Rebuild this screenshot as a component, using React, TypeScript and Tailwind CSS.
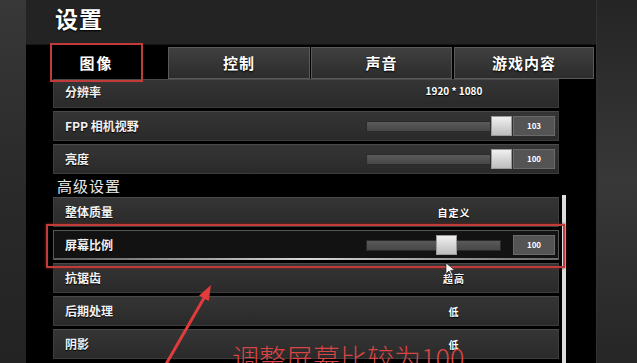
import React from 'react';

type SliderProps = { track: number; thumb: number; value: string };

const Slider: React.FC<SliderProps> = ({ track, thumb, value }) => (
  <div className="flex items-center pl-[14px]">
    <div className="relative w-[146px] h-[20px] flex items-center">
      <div
        className="h-[11px] bg-linear-to-b from-[#5a5a5a] to-[#474747] border border-[#2a2a2a]"
        style={{ width: track }}
      />
      <div
        className="absolute top-0 w-[21px] h-[20px] bg-linear-to-b from-[#f0f0f0] to-[#bdbdbd] border border-[#9a9a9a]"
        style={{ left: thumb }}
      />
    </div>
    <div className="ml-[1px] w-[42px] h-[20px] bg-[#545454] border border-[#6a6a6a] flex items-center justify-center text-[8px] font-bold text-white">
      {value}
    </div>
  </div>
);

type RowProps = {
  label: string;
  value?: string;
  slider?: SliderProps;
  h?: string;
  active?: boolean;
  top?: boolean;
};

const Row: React.FC<RowProps> = ({ label, value, slider, h = 'h-[30px]', active, top }) => (
  <div
    className={
      active
        ? `${h} relative shrink-0 bg-[#121212] border border-[#575757] flex items-center`
        : `${h} shrink-0 bg-linear-to-b from-[#353535] to-[#2a2a2a] border border-[#3c3c3c] border-t-[#4a4a4a] flex ${top ? 'items-start pt-[3px]' : 'items-center'}`
    }
  >
    <div className="flex-1 pl-[11px] text-[12px] font-bold text-[#f2f2f2] [text-shadow:0_1px_1px_#000]">
      {label}
    </div>
    <div className={slider ? 'w-[204px] mr-[2px] flex items-center' : 'w-[204px] mr-[2px] flex items-center justify-center'}>
      {slider ? (
        <Slider {...slider} />
      ) : (
        <span className={`text-[10px] font-bold text-white [text-shadow:0_1px_1px_#000] ${top ? 'tracking-normal' : 'tracking-[1px]'}`}>{value}</span>
      )}
    </div>
    {active && (
      <div className="absolute left-0 right-0 -bottom-px h-[2px] bg-linear-to-r from-[#5a5a5a] via-[#d8d8d8] to-[#6a6a6a]" />
    )}
  </div>
);

const tabs = [
  { label: '控制', cls: 'ml-[25px] w-[142px]' },
  { label: '声音', cls: 'ml-[1px] w-[141px]' },
  { label: '游戏内容', cls: 'ml-[2px] w-[140px]' },
];

export default function App() {
  return (
    <div className="relative w-[637px] h-[363px] overflow-hidden flex bg-[#2a2a2a] font-['Noto_Sans_CJK_SC','Noto_Sans',sans-serif]">
      <div className="w-[26px] h-full bg-linear-to-b from-[#383838] via-[#2a2a2a] to-[#232323]" />

      <div className="w-[570px] h-full flex flex-col">
        <header className="h-[45px] shrink-0 bg-[#232323] border-b border-[#161616] pl-[29px] pt-[3px]">
          <h1 className="text-[23px] leading-[30px] font-bold text-white tracking-[1px] [text-shadow:0_1px_2px_#000]">设置</h1>
        </header>

        <div className="flex-1 bg-black flex flex-col min-h-0">
          <div className="h-[34px] shrink-0 pt-[2px] flex">
            <div className="ml-[24px] w-[93px] h-[32px] bg-black flex items-center justify-center text-[15px] font-bold text-white tracking-[2px]">
              图像
            </div>
            {tabs.map((t) => (
              <div
                key={t.label}
                className={`${t.cls} h-[32px] bg-linear-to-b from-[#404040] to-[#2c2c2c] border border-[#5a5a5a] flex items-center justify-center text-[15px] font-bold text-white tracking-[1px] [text-shadow:0_1px_2px_#000]`}
              >
                {t.label}
              </div>
            ))}
          </div>

          <div className="flex-1 flex pl-[27px] min-h-0">
            <div className="w-[506px] flex flex-col gap-[3px]">
              <Row label="分辨率" value="1920 * 1080" h="h-[29px]" top />
              <Row label="FPP 相机视野" slider={{ track: 125, thumb: 125, value: '103' }} />
              <Row label="亮度" slider={{ track: 125, thumb: 125, value: '100' }} />
              <div className="h-[17px] shrink-0 pl-[4px] text-[15px] leading-[17px] text-[#e8e8e8] tracking-[1px]">高级设置</div>
              <Row label="整体质量" value="自定义" />
              <Row label="屏幕比例" slider={{ track: 135, thumb: 70, value: '100' }} active />
              <Row label="抗锯齿" value="超高" />
              <Row label="后期处理" value="低" />
              <Row label="阴影" value="低" />
            </div>
            <div className="ml-[3px] mt-[116px] w-[4px] bg-[#dcdcdc]" />
          </div>
        </div>
      </div>

      <div className="flex-1 h-full border-l border-[#333] bg-linear-to-b from-[#252525] via-[#383838] to-[#262626]" />

      {/* annotations */}
      <div className="absolute left-[50px] top-[43px] w-[93px] h-[39px] border-2 border-[#c23b3b]" />
      <div className="absolute left-[46px] top-[224px] w-[519px] h-[44px] border-2 border-[#c23b3b] shadow-[0_0_3px_#7a2020]" />

      <svg className="absolute left-0 top-0 pointer-events-none" width="637" height="363">
        <line x1="165" y1="366" x2="204" y2="298" stroke="#e03c3c" strokeWidth="3" strokeLinecap="round" />
        <polygon points="211,285 208.8,301 199,295.5" fill="#e03c3c" />
        <path d="M446 263 L446 274 L449 271 L451.5 276 L453 275.3 L450.6 270.4 L454.5 270 Z" fill="#fff" stroke="#222" strokeWidth="0.7" />
      </svg>

      <div className="absolute left-[232px] top-[342px] text-[27px] leading-[32px] font-light text-[#d94545] whitespace-nowrap font-['Noto_Sans_CJK_SC',serif]">
        调整屏幕比较为100
      </div>
    </div>
  );
}
